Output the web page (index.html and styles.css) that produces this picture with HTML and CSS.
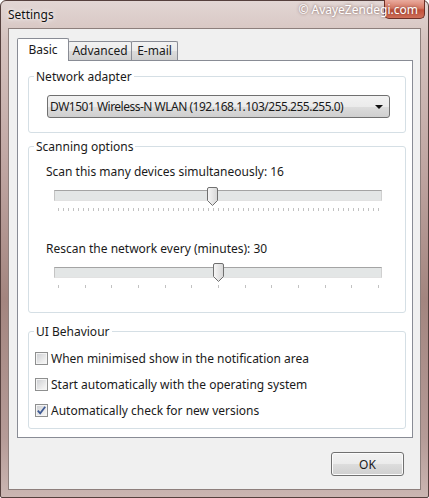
FILE: index.html
```html
<!DOCTYPE html>
<html>
<head>
    <title>Settings</title>
    <link rel="stylesheet" href="styles.css">
</head>
<body>
    <div class="window">
        <!-- caption bar -->
        <div class="titlebar">
            <span class="title">Settings</span>
            <div class="close-btn"></div>
            <span class="watermark">&copy; AvayeZendegi.com</span>
        </div>

        <div class="client">
            <!-- tab strip -->
            <div class="tabs">
                <div class="tab tab-basic active">Basic</div>
                <div class="tab tab-advanced">Advanced</div>
                <div class="tab tab-email">E-mail</div>
            </div>

            <div class="panel">
                <!-- network adapter -->
                <div class="group group-adapter">
                    <div class="group-title">Network adapter</div>
                    <div class="select">
                        <span class="select-text">DW1501 Wireless-N WLAN (192.168.1.103/255.255.255.0)</span>
                        <span class="select-arrow"></span>
                    </div>
                </div>

                <!-- scanning options -->
                <div class="group group-scan">
                    <div class="group-title">Scanning options</div>
                    <div class="field-label">Scan this many devices simultaneously: 16</div>
                    <div class="slider">
                        <div class="track"></div>
                        <div class="ticks ticks-dense"></div>
                        <svg class="thumb thumb-devices" width="11" height="19" viewBox="0 0 11 19">
                            <defs>
                                <linearGradient id="thumbFill" x1="0" y1="0" x2="1" y2="0">
                                    <stop offset="0" stop-color="#f7f7f7"/>
                                    <stop offset="1" stop-color="#d6d6d6"/>
                                </linearGradient>
                            </defs>
                            <path d="M0.5 2 Q0.5 0.5 2 0.5 H9 Q10.5 0.5 10.5 2 V13.5 L5.5 18.5 L0.5 13.5 Z" fill="url(#thumbFill)" stroke="#707070"/>
                        </svg>
                    </div>
                    <div class="field-label field-label-second">Rescan the network every (minutes): 30</div>
                    <div class="slider slider-last">
                        <div class="track"></div>
                        <div class="ticks ticks-sparse">
                            <i></i><i></i><i></i><i></i><i></i><i></i><i></i>
                            <i></i><i></i><i></i><i></i><i></i><i></i>
                        </div>
                        <svg class="thumb thumb-rescan" width="11" height="19" viewBox="0 0 11 19">
                            <path d="M0.5 2 Q0.5 0.5 2 0.5 H9 Q10.5 0.5 10.5 2 V13.5 L5.5 18.5 L0.5 13.5 Z" fill="url(#thumbFill)" stroke="#707070"/>
                        </svg>
                    </div>
                </div>

                <!-- ui behaviour -->
                <div class="group group-ui">
                    <div class="group-title">UI Behaviour</div>
                    <div class="check-row">
                        <span class="checkbox"></span>
                        <span>When minimised show in the notification area</span>
                    </div>
                    <div class="check-row">
                        <span class="checkbox"></span>
                        <span>Start automatically with the operating system</span>
                    </div>
                    <div class="check-row">
                        <span class="checkbox checked">
                            <svg width="11" height="11" viewBox="0 0 11 11">
                                <path d="M1.8 5.6 L4.2 8.4 L9.2 1.8" fill="none" stroke="#3f5a94" stroke-width="1.8"/>
                            </svg>
                        </span>
                        <span>Automatically check for new versions</span>
                    </div>
                </div>
            </div>

            <div class="footer">
                <button class="ok-btn">OK</button>
            </div>
        </div>
    </div>
</body>
</html>
```

FILE: styles.css
```css
body {
    margin: 0;
    font-family: "Noto Sans", sans-serif;
    font-size: 12px;
    color: #1a1a1a;
}

/* Outer aero frame */
.window {
    width: 429px;
    height: 498px;
    box-sizing: border-box;
    border: 1px solid #55403d;
    border-radius: 6px 6px 2px 2px;
    background: linear-gradient(to bottom, #e2d6d4 0%, #d5c2be 8%, #bea4a0 35%, #a3857f 60%, #b59b97 88%, #cbb6b2 100%);
    display: flex;
    flex-direction: column;
    position: relative;
}

.titlebar {
    height: 27px;
    display: flex;
    align-items: flex-start;
    padding-left: 7px;
}

.title {
    margin-top: 5px;
    line-height: 17px;
    color: #111;
    text-shadow: 0 0 6px #fff, 0 0 3px #fff;
}

.close-btn {
    margin: -1px 3px 0 auto;
    width: 41px;
    height: 19px;
    box-sizing: border-box;
    border: 1px solid #6e2f26;
    border-top: none;
    border-radius: 0 0 5px 5px;
    background: linear-gradient(to bottom, #e9ab9e, #d77a66 45%, #c4503a 55%, #d0705a);
}

/* watermark sits over the caption buttons */
.watermark {
    position: absolute;
    top: 1px;
    right: 10px;
    color: #fff;
    line-height: 16px;
    text-shadow: 0 0 3px rgba(90, 50, 45, 0.8);
}

.client {
    flex: 1;
    margin: 0 7px 7px;
    background: #f0f0f0;
    border: 1px solid #8d7f7c;
    display: flex;
    flex-direction: column;
}

/* Tabs */
.tabs {
    height: 31px;
    display: flex;
    align-items: flex-end;
    padding-left: 8px;
}

.tab {
    height: 19px;
    box-sizing: border-box;
    border: 1px solid #898c95;
    border-bottom: none;
    border-radius: 2px 2px 0 0;
    margin-left: -1px;
    line-height: 18px;
    text-align: center;
    background: linear-gradient(to bottom, #f2f2f2, #ebebeb 50%, #dddddd 50%, #cfcfcf);
}

.tab.active {
    height: 23px;
    margin-bottom: -1px;
    line-height: 22px;
    background: #fff;
    position: relative;
    z-index: 1;
}

.tab-basic { width: 52px; margin-left: 0; }
.tab-advanced { width: 64px; }
.tab-email { width: 47px; }

.panel {
    margin: 0 7px 0 8px;
    height: 378px;
    box-sizing: border-box;
    border: 1px solid #898c95;
    background: #fff;
}

/* Group boxes */
.group {
    margin: 15px 6px 0 10px;
    border: 1px solid #d5dfe5;
    border-radius: 3px;
}

.group-scan { margin-top: 13px; padding-bottom: 23px; }
.group-ui { margin-top: 18px; padding-bottom: 5px; }

.group-title {
    width: fit-content;
    margin: -8px 0 0 5px;
    padding: 0 2px;
    line-height: 15px;
    background: #fff;
}

/* Dropdown */
.select {
    margin: 11px 15px 14px 18px;
    height: 23px;
    box-sizing: border-box;
    border: 1px solid #707070;
    border-radius: 3px;
    background: linear-gradient(to bottom, #f2f2f2, #ebebeb 50%, #dddddd 50%, #cfcfcf);
    display: flex;
    align-items: center;
    padding-left: 2px;
}

.select-text {
    letter-spacing: -0.5px;
}

.select-arrow {
    margin: 1px 6px 0 auto;
    border-left: 4px solid transparent;
    border-right: 4px solid transparent;
    border-top: 4px solid #111;
}

/* Sliders */
.field-label {
    margin: 10px 0 7px 17px;
    line-height: 15px;
}

.field-label-second { margin-top: 29px; }

.slider {
    position: relative;
    height: 26px;
    box-sizing: border-box;
    padding-top: 4px;
    margin: 0 23px 0 25px;
}

.track {
    height: 11px;
    box-sizing: border-box;
    border: 1px solid #b4b4b4;
    border-color: #a4a4a4 #d0d0d0 #e2e2e2 #c4c4c4;
    background: #e3e6e6;
}

.ticks {
    margin: 7px 3px 0 4px;
    height: 3px;
}

.ticks-dense {
    background: repeating-linear-gradient(to right, #c2c2c2 0 1px, transparent 1px 5px);
}

.ticks-sparse {
    display: flex;
    justify-content: space-between;
}

.ticks-sparse i {
    width: 1px;
    height: 3px;
    background: #c2c2c2;
}

.thumb {
    position: absolute;
    top: 1px;
}

.thumb-devices { left: 153px; }
.thumb-rescan { left: 159px; top: 0; }

/* Checkboxes */
.check-row {
    height: 26px;
    display: flex;
    align-items: center;
    padding-left: 6px;
}

.group-title + .check-row { margin-top: 6px; }

.checkbox {
    width: 13px;
    height: 13px;
    box-sizing: border-box;
    border: 1px solid #8e8f8f;
    margin-right: 3px;
    background: linear-gradient(135deg, #cbcdd1, #eeeeee 70%, #f8f8f8);
    box-shadow: inset 0 0 0 1px #f4f4f4;
    display: flex;
    align-items: center;
    justify-content: center;
}

/* Footer */
.footer {
    display: flex;
    justify-content: flex-end;
    padding: 14px 16px 0 0;
}

.ok-btn {
    width: 73px;
    height: 24px;
    font-family: inherit;
    font-size: 12px;
    color: #1a1a1a;
    border: 1px solid #707070;
    border-radius: 3px;
    background: linear-gradient(to bottom, #f2f2f2, #ebebeb 50%, #dddddd 50%, #cfcfcf);
    box-shadow: inset 0 0 0 1px #fbfbfb;
    padding: 0;
}
```
